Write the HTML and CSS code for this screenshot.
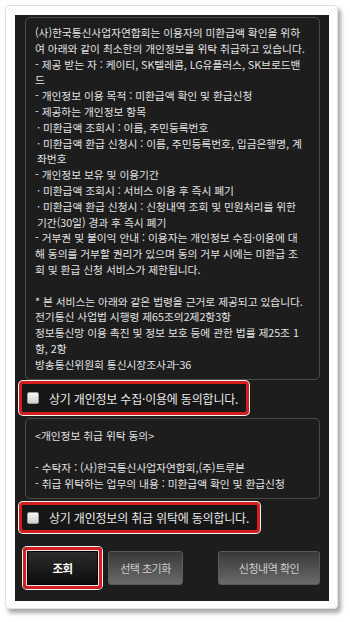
FILE: index.html
```html
<!DOCTYPE html>
<html lang="ko">
<head>
<meta charset="utf-8">
<link rel="stylesheet" href="styles.css">
</head>
<body>
<div class="card">
  <div class="screen">
    <div class="terms terms-main">
      <p>(사)한국통신사업자연합회는 이용자의 미환급액 확인을 위하<br>여 아래와 같이 최소한의 개인정보를 위탁 취급하고 있습니다.</p>
      <p>- 제공 받는 자 : 케이티, SK텔레콤, LG유플러스, SK브로드밴<br>드</p>
      <p>- 개인정보 이용 목적 : 미환급액 확인 및 환급신청</p>
      <p>- 제공하는 개인정보 항목</p>
      <p class="sub">· 미환급액 조회시 : 이름, 주민등록번호</p>
      <p class="sub">· 미환급액 환급 신청시 : 이름, 주민등록번호, 입금은행명, 계<br>좌번호</p>
      <p>- 개인정보 보유 및 이용기간</p>
      <p class="sub">· 미환급액 조회시 : 서비스 이용 후 즉시 폐기</p>
      <p class="sub">· 미환급액 환급 신청시 : 신청내역 조회 및 민원처리를 위한<br>기간(30일) 경과 후 즉시 폐기</p>
      <p>- 거부권 및 불이익 안내 : 이용자는 개인정보 수집·이용에 대<br>해 동의를 거부할 권리가 있으며 동의 거부 시에는 미환급 조<br>회 및 환급 신청 서비스가 제한됩니다.</p>
      <p class="blank">&nbsp;</p>
      <p>* 본 서비스는 아래와 같은 법령을 근거로 제공되고 있습니다.</p>
      <p>전기통신 사업법 시행령 제65조의2제2항3항</p>
      <p>정보통신망 이용 촉진 및 정보 보호 등에 관한 법률 제25조 1<br>항, 2항</p>
      <p>방송통신위원회 통신시장조사과-36</p>
    </div>

    <label class="agree mark agree-1">
      <span class="check"></span>
      <span class="agree-text">상기 개인정보 수집·이용에 동의합니다.</span>
    </label>

    <div class="terms terms-trust">
      <p>&lt;개인정보 취급 위탁 동의&gt;</p>
      <p class="blank">&nbsp;</p>
      <p>- 수탁자 : (사)한국통신사업자연합회,(주)트루본</p>
      <p>- 취급 위탁하는 업무의 내용 : 미환급액 확인 및 환급신청</p>
    </div>

    <label class="agree mark agree-2">
      <span class="check"></span>
      <span class="agree-text">상기 개인정보의 취급 위탁에 동의합니다.</span>
    </label>

    <div class="actions">
      <div class="left-group">
        <span class="mark btn-mark"><button class="btn btn-primary">조회</button></span>
        <button class="btn btn-gray btn-reset">선택 초기화</button>
      </div>
      <button class="btn btn-gray btn-history">신청내역 확인</button>
    </div>
  </div>
</div>
</body>
</html>
```

FILE: styles.css
```css
* { box-sizing: border-box; }

html, body {
  margin: 0;
  padding: 0;
  background: #ffffff;
}

body {
  width: 350px;
  height: 622px;
  overflow: hidden;
  font-family: "Noto Sans CJK KR", "Noto Sans", sans-serif;
}

.card {
  margin: 5px 0 0 5px;
  width: 333px;
  height: 604px;
  background: #ffffff;
  border-radius: 4px;
  border: 1px solid #e2e2e2;
  box-shadow: 3px 4px 4px rgba(0, 0, 0, 0.35);
  padding: 9px 8px 7px 9px;
}

.screen {
  width: 314px;
  height: 586px;
  background: #1d1d1d;
  display: flex;
  flex-direction: column;
  padding: 2px 9px 0 10px;
}

.terms {
  border: 1px solid #4b4b4b;
  border-radius: 5px;
  color: #e2e2e2;
  font-size: 10.75px;
  letter-spacing: -0.05px;
  line-height: 15.8px;
  padding: 7px 2px 6px 9px;
}

.terms p {
  margin: 0;
  white-space: nowrap;
}

.terms .sub {
  padding-left: 2px;
}

.terms-main {
  height: 363px;
}

.terms-trust {
  margin-top: 3px;
  height: 81px;
  line-height: 16px;
  padding-top: 9px;
}

.mark {
  border: 3px solid #d51f1f;
  border-radius: 4px;
  box-shadow: 0 0 0 1px #f2f2f2;
}

.agree {
  align-self: flex-start;
  display: flex;
  align-items: center;
  margin-left: -6px;
  padding: 0 8px 0 5px;
  background: #161616;
}

.agree-1 {
  margin-top: 1px;
  height: 34px;
}

.agree-2 {
  margin-top: 3px;
  height: 31px;
}

.check {
  width: 12px;
  height: 12px;
  border-radius: 2px;
  border: 1px solid #9a9a9a;
  background: linear-gradient(#f6f6f6, #cfcfcf);
  flex: none;
}

.agree-text {
  margin-left: 10px;
  color: #e8e8e8;
  font-size: 12px;
  letter-spacing: -0.2px;
  white-space: nowrap;
}

.actions {
  margin-top: 14px;
  display: flex;
  justify-content: space-between;
  align-items: center;
}

.left-group {
  display: flex;
  align-items: center;
  gap: 6px;
  margin-left: -2px;
}

.btn-mark {
  display: block;
  padding: 1px;
  box-shadow: 0 0 0 1px #f2f2f2, inset 0 0 0 1px #e6e6e6;
}

.btn {
  font-family: "Noto Sans CJK KR", "Noto Sans", sans-serif;
  font-size: 11px;
  letter-spacing: -0.5px;
  height: 34px;
  border-radius: 3px;
  padding: 0;
  cursor: pointer;
}

.btn-primary {
  display: block;
  width: 71px;
  background: linear-gradient(#2c2c2c, #0c0c0c);
  border: 1px solid #000;
  color: #ffffff;
  font-weight: 700;
  font-size: 11.5px;
  letter-spacing: -0.5px;
}

.btn-gray {
  background: linear-gradient(#383838, #6a6a6a);
  border: 1px solid #5a5a5a;
  color: #cccccc;
}

.btn-reset {
  width: 75px;
}

.btn-history {
  width: 102px;
}
```
